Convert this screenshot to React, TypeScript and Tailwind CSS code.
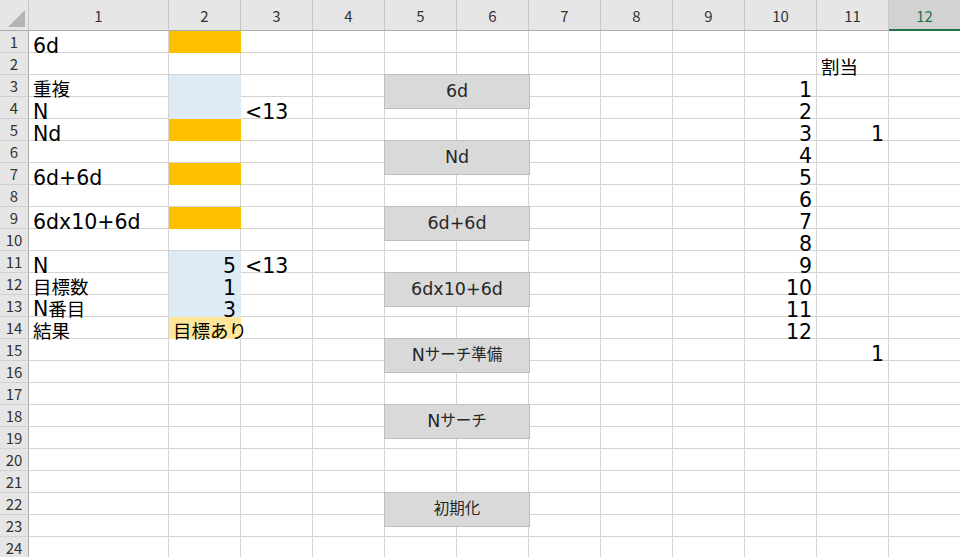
import React from 'react';

const FONT = "font-['DejaVu_Sans','Noto_Sans_CJK_JP',sans-serif]";

type Cell = { text?: string; right?: boolean; fill?: string };

const ORANGE = 'bg-[#ffc000] border-[#ffc000]';
const BLUE = 'bg-[#ddebf7] border-[#ddebf7]';
const YELLOW = 'bg-[#ffe699] border-[#ffe699]';

// key: "row-col"
const cells: Record<string, Cell> = {
  '1-1': { text: '6d' },
  '1-2': { fill: ORANGE },
  '3-1': { text: '重複' },
  '3-2': { fill: BLUE },
  '4-1': { text: 'N' },
  '4-2': { fill: BLUE },
  '4-3': { text: '<13' },
  '5-1': { text: 'Nd' },
  '5-2': { fill: ORANGE },
  '7-1': { text: '6d+6d' },
  '7-2': { fill: ORANGE },
  '9-1': { text: '6dx10+6d' },
  '9-2': { fill: ORANGE },
  '11-1': { text: 'N' },
  '11-2': { text: '5', right: true, fill: BLUE },
  '11-3': { text: '<13' },
  '12-1': { text: '目標数' },
  '12-2': { text: '1', right: true, fill: BLUE },
  '13-1': { text: 'N番目' },
  '13-2': { text: '3', right: true, fill: BLUE },
  '14-1': { text: '結果' },
  '14-2': { text: '目標あり', fill: YELLOW },
  '2-11': { text: '割当' },
  '5-11': { text: '1', right: true },
  '15-11': { text: '1', right: true },
};

for (let n = 1; n <= 12; n++) {
  cells[`${n + 2}-10`] = { text: String(n), right: true };
}

const buttons: Record<number, string> = {
  3: '6d',
  6: 'Nd',
  9: '6d+6d',
  12: '6dx10+6d',
  15: 'Nサーチ準備',
  18: 'Nサーチ',
  22: '初期化',
};

const cols = Array.from({ length: 12 }, (_, i) => i + 1);
const rows = Array.from({ length: 24 }, (_, i) => i + 1);

// japanese glyphs come out a bit smaller than the latin ones in the sheet font
function Mixed({ text, cjk }: { text: string; cjk: string }) {
  const parts = text.split(/([\u3000-\u9fff]+)/).filter(Boolean);
  return (
    <>
      {parts.map((p, i) =>
        /[\u3000-\u9fff]/.test(p) ? (
          <span key={i} className={cjk}>
            {p}
          </span>
        ) : (
          <span key={i}>{p}</span>
        )
      )}
    </>
  );
}

function ColumnHeader({ n }: { n: number }) {
  const selected = n === 12;
  return (
    <div
      className={`flex items-center justify-center border-r pt-[3px] text-[15px] font-['Noto_Sans_CJK_JP',sans-serif] ${
        selected
          ? 'bg-[#d2d2d2] border-r-[#c6c6c6] border-b-2 border-b-[#217346] text-[#217346]'
          : 'bg-[#e6e6e6] border-b border-r-[#c6c6c6] border-b-[#ababab] text-[#333]'
      }`}
    >
      {n}
    </div>
  );
}

export default function App() {
  return (
    <div className="h-[557px] w-[960px] overflow-hidden bg-white">
      <div className="grid grid-cols-[29px_140px_repeat(11,72px)] grid-rows-[31px_repeat(24,22px)]">
        <div className="relative border-r border-b border-r-[#c6c6c6] border-b-[#ababab] bg-[#e6e6e6]">
          <svg className="absolute right-[3px] bottom-[3px]" width="17" height="17" viewBox="0 0 17 17">
            <polygon points="17,0 17,17 0,17" fill="#b4b4b4" />
          </svg>
        </div>
        {cols.map((c) => (
          <ColumnHeader key={c} n={c} />
        ))}

        {rows.map((r) => (
          <React.Fragment key={r}>
            <div className="flex items-center justify-center border-r border-b border-r-[#ababab] border-b-[#d0d0d0] bg-[#e6e6e6] text-[15px] leading-none text-[#333] font-['Noto_Sans_CJK_JP',sans-serif]">
              {r}
            </div>
            {cols.map((c) => {
              const cell = cells[`${r}-${c}`] ?? {};
              const label = c === 5 ? buttons[r] : undefined;
              return (
                <div
                  key={c}
                  className={`relative flex items-end whitespace-nowrap border-r border-b px-[4px] text-[20.5px] leading-[12px] text-black ${FONT} ${
                    cell.right ? 'justify-end' : 'justify-start'
                  } ${cell.fill ?? 'border-[#d4d4d4]'}`}
                >
                  {cell.text && (
                    <span>
                      <Mixed text={cell.text} cjk="text-[18.5px]" />
                    </span>
                  )}
                  {label && (
                    <button className="absolute left-[-1px] top-[-1px] z-10 flex h-[35px] w-[146px] items-center justify-center border border-[#bdbdbd] bg-[#d9d9d9] text-[17.5px] leading-none text-[#262626]">
                      <Mixed text={label} cjk="text-[15.5px]" />
                    </button>
                  )}
                </div>
              );
            })}
          </React.Fragment>
        ))}
      </div>
    </div>
  );
}
